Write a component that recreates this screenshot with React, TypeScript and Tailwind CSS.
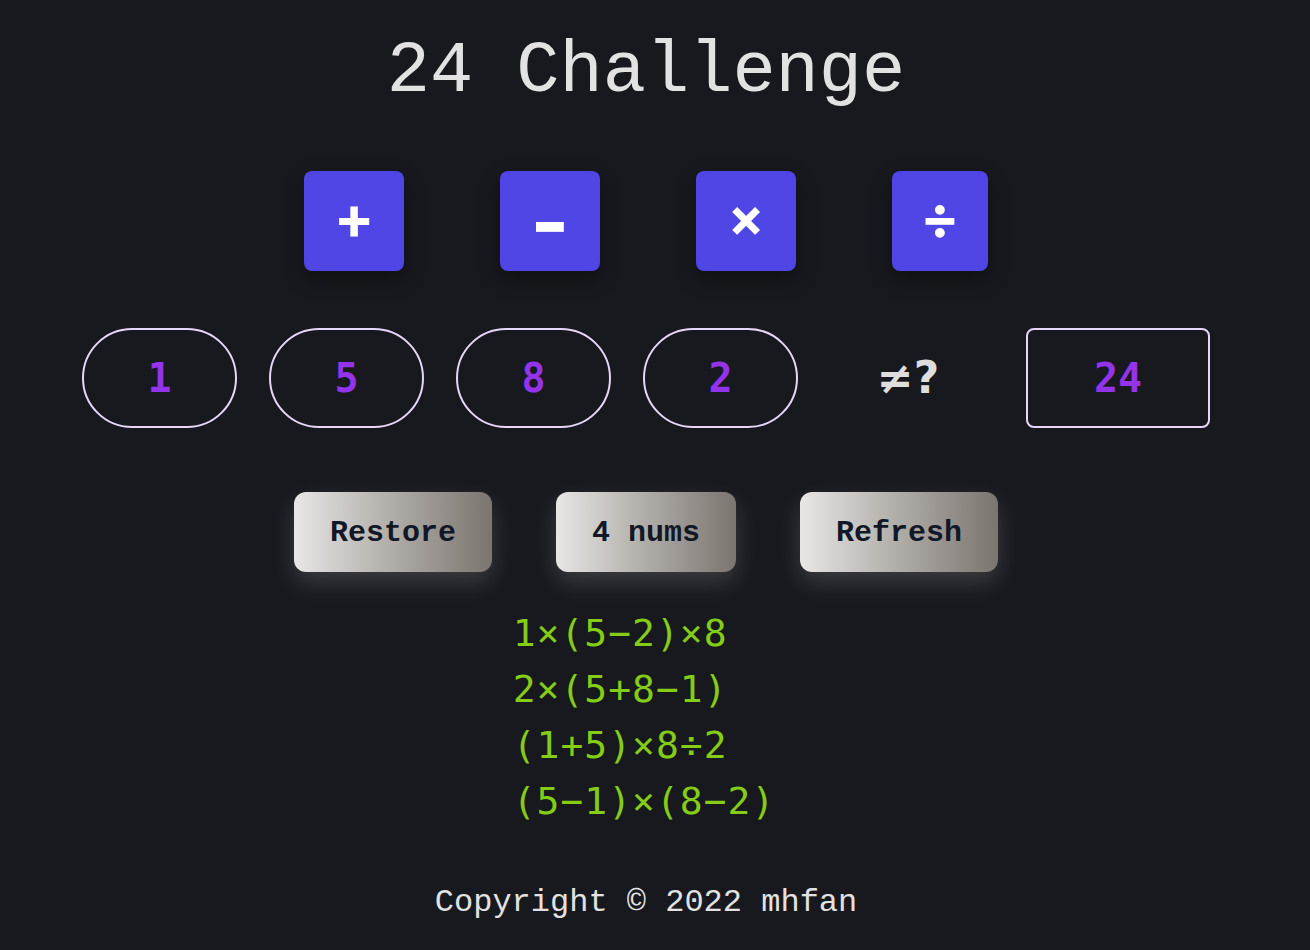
import React from "react";

export default function App() {
  const ops = [
    { o: "+", c: "w-[100px] text-[60px] leading-none pb-[8px]" },
    { o: "-", c: "w-[100px] text-[84px] leading-none pt-[2px]" },
    { o: "×", c: "w-[100px] text-[54px] leading-none pb-[8px]" },
    { o: "÷", c: "w-[96px] text-[58px] leading-none pb-[8px]" },
  ];
  const nums = ["1", "5", "8", "2"];
  const sols = ["1×(5−2)×8", "2×(5+8−1)", "(1+5)×8÷2", "(5−1)×(8−2)"];
  const btns = [
    { t: "Restore", w: "w-[198px]" },
    { t: "4 nums", w: "w-[180px]" },
    { t: "Refresh", w: "w-[198px]" },
  ];
  return (
    <div className="min-h-screen w-full bg-[#17191e]">
      <div className="w-[1292px] flex flex-col items-center">
        <h1 className="mt-[36px] text-[72px] leading-[72px] text-[#e2e2e2] font-['Liberation_Mono','Courier_New',monospace]">
          24 Challenge
        </h1>

        <div className="mt-[63px] flex gap-[96px]">
          {ops.map((x) => (
            <button
              key={x.o}
              className={`h-[100px] ${x.c} rounded-lg bg-[#4f46e5] text-white flex items-center justify-center font-bold shadow-[0_8px_20px_rgba(0,0,0,0.35)] font-['Inter','Noto_Sans',sans-serif]`}
            >
              {x.o}
            </button>
          ))}
        </div>

        <div className="mt-[57px] flex items-center">
          <div className="flex gap-[32px]">
            {nums.map((n) => (
              <div
                key={n}
                className="w-[155px] h-[100px] rounded-full border-2 border-[#e6d6f7] flex items-center justify-center text-[40px] font-bold text-[#9333ea] font-['DejaVu_Sans_Mono',monospace]"
              >
                {n}
              </div>
            ))}
          </div>
          <div className="w-[228px] pr-[8px] flex items-center justify-center text-[44px] font-bold text-[#dedede] font-['DejaVu_Sans',sans-serif]">
            ≠?
          </div>
          <div className="w-[184px] h-[100px] rounded-lg border-2 border-[#e6d6f7] flex items-center justify-center text-[40px] font-bold text-[#9333ea] font-['DejaVu_Sans_Mono',monospace]">
            24
          </div>
        </div>

        <div className="mt-[64px] flex gap-[64px]">
          {btns.map((b) => (
            <button
              key={b.t}
              className={`${b.w} h-[80px] pt-[3px] rounded-xl bg-gradient-to-r from-[#e8e7e5] to-[#7b756f] text-[#111827] text-[30px] font-bold shadow-[0_10px_24px_rgba(255,255,255,0.16)] font-['Liberation_Mono','Courier_New',monospace]`}
            >
              {b.t}
            </button>
          ))}
        </div>

        <div className="mt-[33px] pr-[4px] flex flex-col items-start text-[#84cc16] text-[38px] leading-[56px] tracking-[1px] font-['DejaVu_Sans_Mono',monospace]">
          {sols.map((s) => (
            <div key={s}>{s}</div>
          ))}
        </div>

        <div className="mt-[50px] text-[32px] text-[#e2e2e2] font-['Liberation_Mono','Courier_New',monospace]">
          Copyright © 2022 mhfan
        </div>
      </div>
    </div>
  );
}
